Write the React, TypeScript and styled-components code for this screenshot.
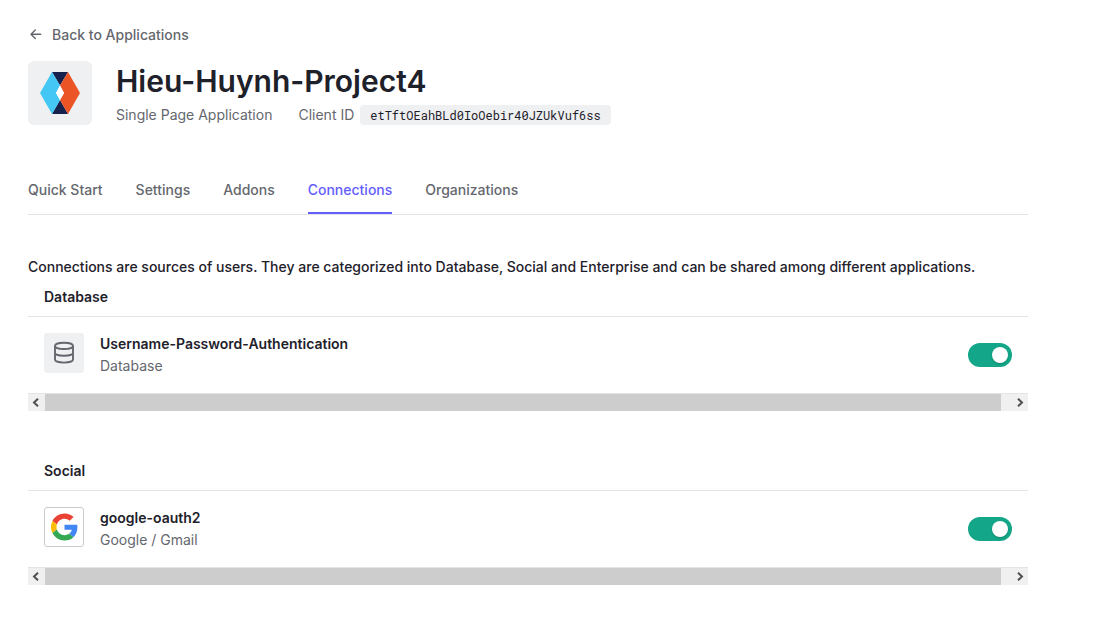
import React, { useState } from "react";
import styled, { createGlobalStyle } from "styled-components";

const GlobalStyle = createGlobalStyle`
  *, *::before, *::after { box-sizing: border-box; }
  body {
    margin: 0;
    background: #fff;
    color: #1e212a;
    font-family: Inter, "Liberation Sans", sans-serif;
    font-size: 14px;
    line-height: 22px;
  }
  h1, h2, h3, p { margin: 0; }
`;

const Page = styled.main`
  padding: 24px 84px 40px 28px;
`;

const BackLink = styled.a`
  display: inline-flex;
  align-items: center;
  gap: 8px;
  color: #65676e;
  font-weight: 500;
  text-decoration: none;
`;

const Header = styled.header`
  display: flex;
  align-items: flex-start;
  gap: 24px;
  margin-top: 12px;
`;

const AppLogo = styled.div`
  display: flex;
  align-items: center;
  justify-content: center;
  width: 64px;
  height: 64px;
  border-radius: 6px;
  background: #eff0f2;
`;

const Title = styled.h1`
  font-size: 30px;
  line-height: 40px;
  font-weight: 600;
`;

const Meta = styled.div`
  display: flex;
  align-items: center;
  gap: 26px;
  margin-top: 3px;
  color: #65676e;
`;

const ClientId = styled.span`
  display: flex;
  align-items: center;
  gap: 6px;
`;

const Code = styled.code`
  padding: 0 10px;
  border-radius: 4px;
  background: #eff0f2;
  color: #1e212a;
  font-family: "Roboto Mono", "DejaVu Sans Mono", monospace;
  font-size: 12px;
  line-height: 20px;
`;

const Tabs = styled.nav`
  display: flex;
  gap: 33px;
  margin-top: 40px;
  border-bottom: 1px solid #e3e4e6;
`;

const Tab = styled.a<{ $active?: boolean }>`
  padding: 13px 0 11px;
  border-bottom: 2px solid ${(p) => (p.$active ? "#635dff" : "transparent")};
  color: ${(p) => (p.$active ? "#635dff" : "#65676e")};
  font-weight: 500;
  text-decoration: none;
`;

const Intro = styled.p`
  margin-top: 41px;
  font-weight: 500;
`;

const Section = styled.section`
  & + & { margin-top: 41px; }
`;

const SectionTitle = styled.h2`
  padding: 8px 16px;
  border-bottom: 1px solid #e3e4e6;
  font-size: 14px;
  line-height: 22px;
  font-weight: 600;
`;

const Row = styled.div`
  display: flex;
  align-items: center;
  gap: 16px;
  height: 76px;
  padding: 0 16px;
`;

const IconBox = styled.div<{ $outlined?: boolean }>`
  display: flex;
  align-items: center;
  justify-content: center;
  width: 40px;
  height: 40px;
  margin-bottom: 4px;
  border: 1px solid ${(p) => (p.$outlined ? "#c9cace" : "#eff0f2")};
  border-radius: 3px;
  background: ${(p) => (p.$outlined ? "#fff" : "#eff0f2")};
`;

const RowText = styled.div`
  flex: 1;
`;

const Name = styled.h3`
  font-size: 14px;
  line-height: 22px;
  font-weight: 600;
`;

const Kind = styled.p`
  color: #65676e;
`;

const Switch = styled.input`
  appearance: none;
  display: flex;
  align-items: center;
  width: 44px;
  height: 24px;
  margin: 0;
  padding: 0 4px;
  border-radius: 12px;
  background: #c9cace;
  cursor: pointer;
  &::before {
    content: "";
    width: 16px;
    height: 16px;
    border-radius: 50%;
    background: #fff;
    box-shadow: 0 1px 2px rgba(0, 0, 0, 0.2);
  }
  &:checked {
    justify-content: flex-end;
    background: #13a688;
  }
`;

const ScrollBar = styled.div`
  display: flex;
  height: 18px;
  border-top: 1px solid #e3e4e6;
  background: #f0f0f0;
`;

const ScrollButton = styled.button`
  display: flex;
  align-items: center;
  justify-content: center;
  width: 17px;
  padding: 0;
  border: 0;
  background: transparent;
`;

const ScrollThumb = styled.div`
  flex: 1;
  margin-right: 10px;
  background: #cdcdcd;
`;

const ArrowIcon = () => (
  <svg width="16" height="16" viewBox="0 0 16 16" fill="none" stroke="#65676e" strokeWidth="1.4" strokeLinecap="round" strokeLinejoin="round" aria-hidden="true">
    <path d="M12.7 7.3H3M7.3 3 3 7.3l4.3 4.3" />
  </svg>
);

const HexLogo = () => (
  <svg width="40" height="42" viewBox="0 0 40 42" aria-hidden="true">
    <path d="M12 0H28L20 13.5zM12 42H28L20 28z" fill="#16214d" />
    <path d="M12 0 20 13.5 16 21 20 28 12 42 0 21z" fill="#44c7f4" />
    <path d="M28 0 20 13.5 24 21 20 28 28 42 40 21z" fill="#eb5424" />
    <path d="M20 13.5 24 21 20 28 16 21z" fill="#fff" />
  </svg>
);

const DatabaseIcon = () => (
  <svg width="24" height="24" viewBox="0 0 24 24" fill="none" stroke="#65676e" strokeWidth="1.9" aria-hidden="true">
    <ellipse cx="12" cy="4.9" rx="9" ry="3.1" />
    <path d="M3 4.9v13.6c0 1.8 4 3.1 9 3.1s9-1.3 9-3.1V4.9M3 11.7c0 1.8 4 3.1 9 3.1s9-1.3 9-3.1" />
  </svg>
);

const GoogleIcon = () => (
  <svg width="27" height="28" viewBox="0 0 48 48" aria-hidden="true">
    <path fill="#EA4335" d="M24 9.5c3.54 0 6.71 1.22 9.21 3.6l6.85-6.85C35.9 2.38 30.47 0 24 0 14.62 0 6.51 5.38 2.56 13.22l7.98 6.19C12.43 13.72 17.74 9.5 24 9.5z" />
    <path fill="#4285F4" d="M46.98 24.55c0-1.57-.15-3.09-.38-4.55H24v9.02h12.94c-.58 2.96-2.26 5.48-4.78 7.18l7.73 6c4.51-4.18 7.09-10.36 7.09-17.65z" />
    <path fill="#FBBC05" d="M10.53 28.59c-.48-1.45-.76-2.99-.76-4.59s.27-3.14.76-4.59l-7.98-6.19C.92 16.46 0 20.12 0 24s.92 7.54 2.56 10.78l7.97-6.19z" />
    <path fill="#34A853" d="M24 48c6.48 0 11.93-2.13 15.89-5.81l-7.73-6c-2.15 1.45-4.92 2.3-8.16 2.3-6.26 0-11.57-4.22-13.47-9.91l-7.98 6.19C6.51 42.62 14.62 48 24 48z" />
  </svg>
);

const Chevron = ({ right }: { right?: boolean }) => (
  <svg width="9" height="9" viewBox="0 0 9 9" fill="none" stroke="#505050" strokeWidth="2" aria-hidden="true">
    <path d={right ? "M3 .7 7 4.5 3 8.3" : "M6 .7 2 4.5 6 8.3"} />
  </svg>
);

const HorizontalScroll = () => (
  <ScrollBar>
    <ScrollButton aria-label="Scroll left"><Chevron /></ScrollButton>
    <ScrollThumb />
    <ScrollButton aria-label="Scroll right"><Chevron right /></ScrollButton>
  </ScrollBar>
);

type ConnectionProps = {
  title: string;
  name: string;
  kind: string;
  icon: React.ReactNode;
  outlined?: boolean;
};

const Connection = ({ title, name, kind, icon, outlined }: ConnectionProps) => {
  const [enabled, setEnabled] = useState(true);
  return (
    <Section>
      <SectionTitle>{title}</SectionTitle>
      <Row>
        <IconBox $outlined={outlined}>{icon}</IconBox>
        <RowText>
          <Name>{name}</Name>
          <Kind>{kind}</Kind>
        </RowText>
        <Switch type="checkbox" role="switch" aria-label={name} checked={enabled} onChange={(e) => setEnabled(e.target.checked)} />
      </Row>
      <HorizontalScroll />
    </Section>
  );
};

const tabs = ["Quick Start", "Settings", "Addons", "Connections", "Organizations"];

export default function App() {
  return (
    <>
      <GlobalStyle />
      <Page>
        <BackLink href="#applications"><ArrowIcon />Back to Applications</BackLink>
        <Header>
          <AppLogo><HexLogo /></AppLogo>
          <div>
            <Title>Hieu-Huynh-Project4</Title>
            <Meta>
              <span>Single Page Application</span>
              <ClientId>Client ID <Code>etTftOEahBLd0IoOebir40JZUkVuf6ss</Code></ClientId>
            </Meta>
          </div>
        </Header>
        <Tabs>
          {tabs.map((tab) => (
            <Tab key={tab} href={`#${tab}`} $active={tab === "Connections"}>{tab}</Tab>
          ))}
        </Tabs>
        <Intro>
          Connections are sources of users. They are categorized into Database, Social and Enterprise and can be shared among different applications.
        </Intro>
        <Connection title="Database" name="Username-Password-Authentication" kind="Database" icon={<DatabaseIcon />} />
        <Connection title="Social" name="google-oauth2" kind="Google / Gmail" icon={<GoogleIcon />} outlined />
      </Page>
    </>
  );
}
